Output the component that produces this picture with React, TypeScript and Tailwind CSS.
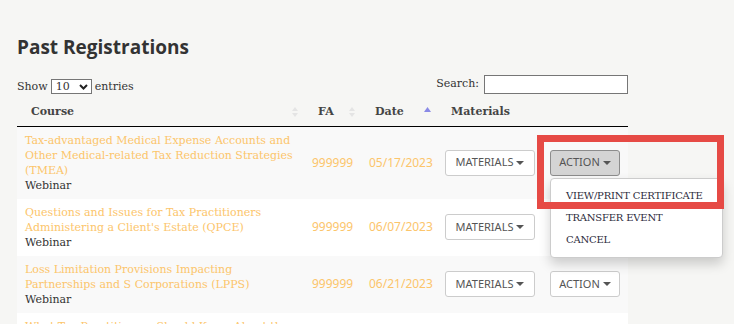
import React from 'react';

const serif = 'font-["DejaVu_Serif","Liberation_Serif",serif]';

const rows = [
  {
    title: 'Tax-advantaged Medical Expense Accounts and Other Medical-related Tax Reduction Strategies (TMEA)',
    fa: '999999',
    date: '05/17/2023',
    active: true,
  },
  {
    title: "Questions and Issues for Tax Practitioners Administering a Client's Estate (QPCE)",
    fa: '999999',
    date: '06/07/2023',
  },
  {
    title: 'Loss Limitation Provisions Impacting Partnerships and S Corporations (LPPS)',
    fa: '999999',
    date: '06/21/2023',
  },
  {
    title: 'What Tax Practitioners Should Know About the Taxation of Cryptocurrency (TTCC)',
    fa: '999999',
    date: '07/12/2023',
  },
];

const Caret = () => (
  <span className="ml-[3px] inline-block h-0 w-0 border-x-[4px] border-t-[4px] border-x-transparent border-t-[#555] align-middle" />
);

const SortBoth = () => (
  <svg width="6" height="10" viewBox="0 0 6 10" className="absolute right-[6px] top-1/2 -translate-y-1/2">
    <path d="M3 0 L6 4 H0 Z" fill="#e4e4e4" />
    <path d="M3 10 L6 6 H0 Z" fill="#e4e4e4" />
  </svg>
);

const SortAsc = () => (
  <svg width="7" height="5" viewBox="0 0 7 5" className="absolute right-[6px] top-[9px]">
    <path d="M3.5 0 L7 5 H0 Z" fill="#8a8ae6" />
  </svg>
);

export default function App() {
  return (
    <div className="h-[324px] w-full overflow-hidden bg-[#f6f6f4] text-[#333]">
      <div className="relative ml-[17px] w-[611px] pt-[34px]">
        <h2 className='font-["Open_Sans",sans-serif] text-[19px] font-bold leading-[26px] text-[#333]'>
          Past Registrations
        </h2>

        <div className={`mt-[15px] flex items-end justify-between ${serif} text-[11px] text-[#333]`}>
          <label className="mb-[-1px] flex items-center gap-[3px]">
            Show
            <span className="flex h-[15px] w-[41px] items-center justify-between border border-[#767676] bg-white pl-[4px] pr-[3px] text-[11px]">
              10
              <svg width="9" height="6" viewBox="0 0 9 6">
                <path d="M1 1 L4.5 4.5 L8 1" stroke="#222" strokeWidth="2" fill="none" />
              </svg>
            </span>
            entries
          </label>
          <label className="flex items-center gap-[5px]">
            Search:
            <span className="block h-[19px] w-[144px] border border-[#767676] bg-white" />
          </label>
        </div>

        <table className={`mt-[4px] w-[611px] table-fixed border-collapse ${serif} text-[11px]`}>
          <colgroup>
            <col className="w-[287px]" />
            <col className="w-[57px]" />
            <col className="w-[76px]" />
            <col className="w-[105px]" />
            <col className="w-[86px]" />
          </colgroup>
          <thead>
            <tr className="border-b border-black text-left font-bold text-[#444]">
              <th className="relative h-[28px] pl-[14px] font-bold">
                Course
                <SortBoth />
              </th>
              <th className="relative pl-[14px] font-bold">
                FA
                <SortBoth />
              </th>
              <th className="relative pl-[14px] font-bold">
                Date
                <SortAsc />
              </th>
              <th className="pl-[14px] font-bold">Materials</th>
              <th />
            </tr>
          </thead>
          <tbody>
            {rows.map((r, i) => (
              <tr key={i} className={i % 2 === 0 ? 'bg-[#f9f9f9]' : 'bg-white'}>
                <td className="px-[8px] py-[6px] align-middle leading-[15px]">
                  <div className="text-[#fcc56b]">{r.title}</div>
                  <div className="text-[#333]">Webinar</div>
                </td>
                <td className='px-[8px] align-middle font-["Noto_Sans",sans-serif] text-[12px] text-[#fcc56b]'>{r.fa}</td>
                <td className='px-[8px] align-middle font-["Noto_Sans",sans-serif] text-[12px] text-[#fcc56b]'>{r.date}</td>
                <td className="px-[8px] align-middle">
                  <button className='flex h-[26px] w-[90px] items-center justify-center rounded-[3px] border border-[#ccc] bg-white font-["Noto_Sans",sans-serif] text-[11px] text-[#555]'>
                    MATERIALS
                    <Caret />
                  </button>
                </td>
                <td className="relative px-[8px] align-middle">
                  <button
                    className={`flex h-[26px] w-[70px] items-center justify-center rounded-[3px] border font-["Noto_Sans",sans-serif] text-[11px] text-[#555] ${
                      r.active ? 'border-[#8c8c8c] bg-[#d4d4d4]' : 'border-[#ccc] bg-white'
                    }`}
                  >
                    ACTION
                    <Caret />
                  </button>
                </td>
              </tr>
            ))}
          </tbody>
        </table>

        {/* open action menu for first row */}
        <ul
          className={`absolute left-[533px] top-[178px] z-10 w-[173px] whitespace-nowrap rounded-[4px] border border-[#ccc] bg-white py-[6px] ${serif} text-[10px] tracking-[-0.2px] leading-[22px] text-[#2b2b3b] shadow-[0_6px_12px_rgba(0,0,0,0.18)]`}
        >
          <li className="px-[15px]">VIEW/PRINT CERTIFICATE</li>
          <li className="px-[15px]">TRANSFER EVENT</li>
          <li className="px-[15px]">CANCEL</li>
        </ul>

        {/* highlight box */}
        <div className="pointer-events-none absolute left-[520px] top-[135px] z-20 h-[74px] w-[187px] border-[7px] border-[#e64a45]" />
      </div>
    </div>
  );
}
